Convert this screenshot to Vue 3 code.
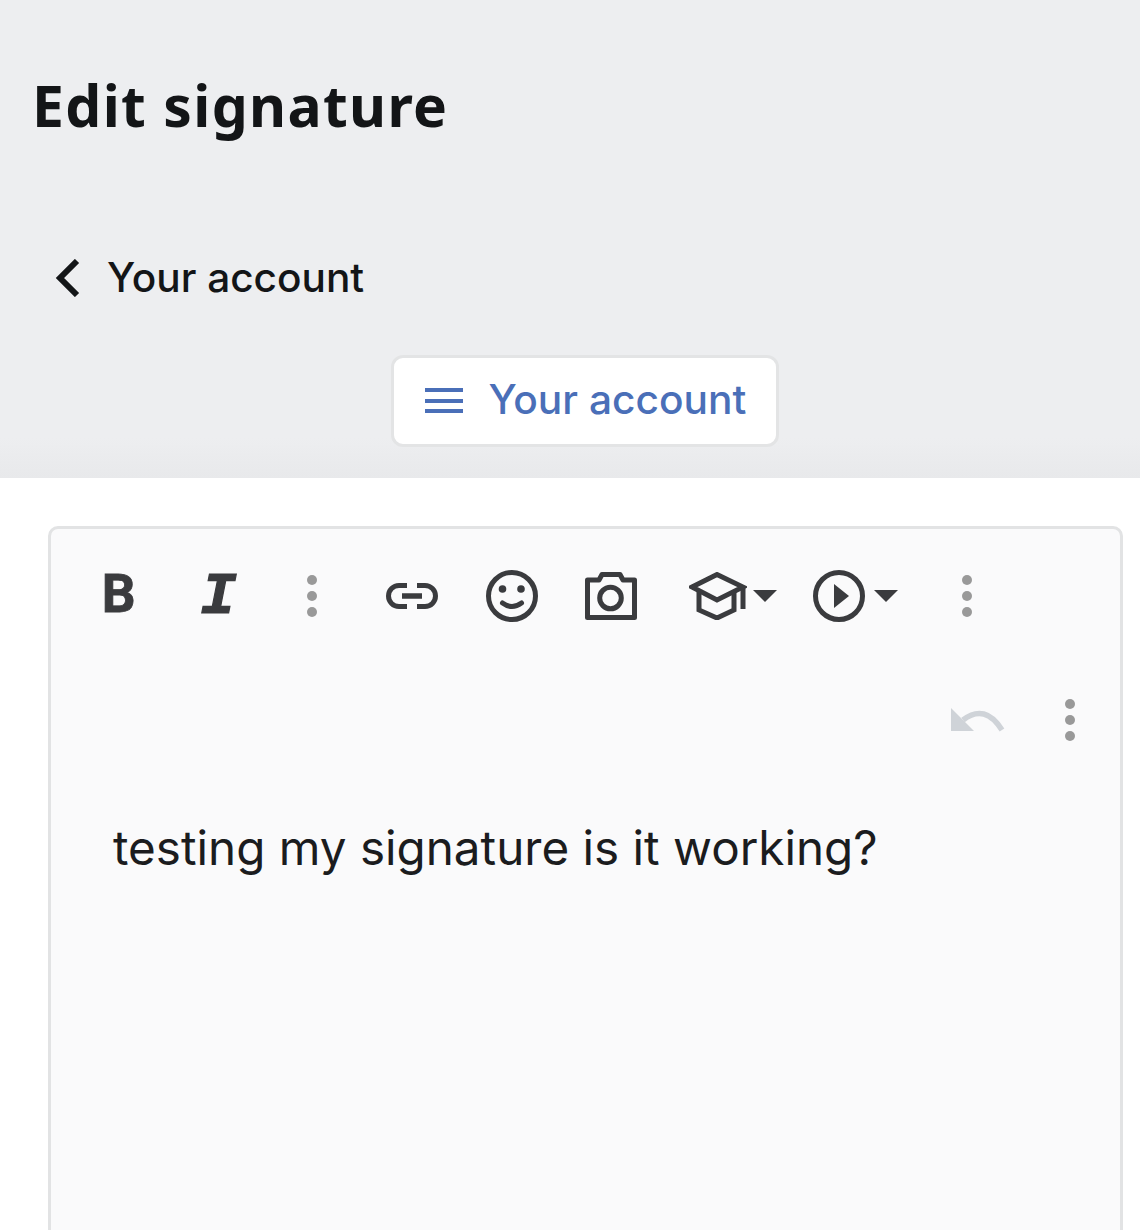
<template>
  <div class="page">
    <header class="top">
      <h1 class="title">Edit signature</h1>
      <a class="back">
        <svg width="26" height="38" viewBox="0 0 26 38" class="back-icon">
          <path d="M23 2 L6 19 L23 36" fill="none" stroke="#131517" stroke-width="6" />
        </svg>
        <span>Your account</span>
      </a>
      <div class="nav-wrap">
        <button class="nav-btn">
          <svg width="38" height="26" viewBox="0 0 38 26">
            <path d="M0 2 H38 M0 13 H38 M0 23 H38" stroke="#4a6fb8" stroke-width="4" />
          </svg>
          <span>Your account</span>
        </button>
      </div>
    </header>

    <main class="content">
      <div class="editor">
        <div class="toolbar">
          <span class="tool wide glyph-b">B</span>
          <span class="tool wide glyph-i">I</span>
          <span class="tool narrow group-end">
            <svg width="10" height="42" viewBox="0 0 10 42"><circle v-for="y in dots" :key="y" cx="5" :cy="y" r="5" fill="#999" /></svg>
          </span>
          <span class="tool wide">
            <svg width="52" height="26" viewBox="0 0 52 26" fill="none" stroke="#3a3b3e" stroke-width="5">
              <path d="M21 2.5 H13 a10.5 10.5 0 0 0 0 21 H21" />
              <path d="M31 2.5 H39 a10.5 10.5 0 0 1 0 21 H31" />
              <path d="M16 13 H36" stroke-width="5.5" />
            </svg>
          </span>
          <span class="tool wide">
            <svg width="52" height="52" viewBox="0 0 52 52" fill="none" stroke="#3a3b3e" stroke-width="5">
              <circle cx="26" cy="26" r="23.5" />
              <circle cx="16.5" cy="19" r="3.8" fill="#3a3b3e" stroke="none" />
              <circle cx="35" cy="19" r="3.8" fill="#3a3b3e" stroke="none" />
              <path d="M16.5 33 Q26 40 35.5 33" stroke-linecap="round" />
            </svg>
          </span>
          <span class="tool wide camera">
            <svg width="52" height="48" viewBox="0 0 52 48" fill="none" stroke="#3a3b3e" stroke-width="5" stroke-linejoin="round">
              <path d="M14 8 L17 2.5 H35 L38 8 H49.5 V45.5 H2.5 V8 Z" />
              <circle cx="25.5" cy="26" r="10.8" />
            </svg>
          </span>
          <span class="tool drop">
            <svg width="58" height="48" viewBox="0 0 58 48" fill="none" stroke="#3a3b3e" stroke-width="5">
              <path d="M3 15 L28 2.5 L54 15 L28 28 Z" />
              <path d="M10 20 V38 L28 46 L45 38 V20" />
              <path d="M54 15 V37" />
            </svg>
            <i class="caret"></i>
          </span>
          <span class="tool drop play">
            <svg width="52" height="52" viewBox="0 0 52 52" fill="none" stroke="#3a3b3e" stroke-width="5">
              <circle cx="26" cy="26" r="23.5" />
              <path d="M21 14 L36 26 L21 38 Z" fill="#3a3b3e" stroke="none" />
            </svg>
            <i class="caret"></i>
          </span>
          <span class="tool narrow last">
            <svg width="10" height="42" viewBox="0 0 10 42"><circle v-for="y in dots" :key="y" cx="5" :cy="y" r="5" fill="#999" /></svg>
          </span>
        </div>

        <div class="toolbar-right">
          <svg width="54" height="26" viewBox="0 0 54 26" fill="none">
            <path d="M0 1 V24 H23 Z" fill="#cfd3d8" />
            <path d="M12 13 Q34 -4 51 23" stroke="#cfd3d8" stroke-width="5.5" />
          </svg>
          <svg class="more" width="10" height="42" viewBox="0 0 10 42"><circle v-for="y in dots" :key="y" cx="5" :cy="y" r="5" fill="#999" /></svg>
        </div>

        <p class="body-text">testing my signature is it working?</p>
      </div>
    </main>
  </div>
</template>

<script setup>
const dots = [5, 21, 37]
</script>

<style>
html, body { margin: 0; background: #fff; overflow: hidden; }
</style>

<style scoped>
.page {
  height: 1230px;
  overflow: hidden;
  font-family: Inter, "Liberation Sans", sans-serif;
  color: #131517;
}
.top {
  height: 478px;
  box-sizing: border-box;
  padding: 66px 0 0 32px;
  background: linear-gradient(#edeef0 calc(100% - 40px), #e8e9eb);
}
.title {
  margin: 0;
  font-family: "Noto Sans", sans-serif;
  font-size: 57px;
  font-weight: 700;
  letter-spacing: 1.35px;
  line-height: 78px;
}
.back {
  display: flex;
  align-items: center;
  gap: 27px;
  margin: 106px 0 0 22px;
  height: 56px;
  font-size: 40.6px;
  font-weight: 500;
}
.back span {
  padding-bottom: 2px;
}
.nav-wrap {
  display: flex;
  justify-content: center;
  margin: 49px 0 0 -3px;
}
.nav-btn {
  display: flex;
  align-items: center;
  gap: 26px;
  width: 388px;
  height: 92px;
  box-sizing: border-box;
  padding: 0 0 0 31px;
  background: #fff;
  border: 3px solid #e3e4e5;
  border-radius: 12px;
  color: #4a6fb8;
  font-family: inherit;
  font-size: 40.7px;
  font-weight: 500;
}
.nav-btn span {
  padding-bottom: 4px;
}
.content {
  padding: 48px 17px 0 48px;
}
.editor {
  height: 720px;
  box-sizing: border-box;
  background: #fafafb;
  border: 3px solid #e2e3e4;
  border-radius: 10px;
}
.toolbar {
  display: flex;
  align-items: center;
  height: 86px;
  margin-top: 24px;
  padding-left: 18px;
}
.tool {
  display: flex;
  align-items: center;
  justify-content: center;
  height: 86px;
}
.wide { width: 99.5px; }
.narrow { width: 88.5px; }
.group-end { margin-right: 6px; }
.camera { margin-right: 12px; }
.drop { gap: 6px; width: 120px; }
.play { gap: 9px; width: 124px; }
.last { margin-left: 6px; }
.glyph-b {
  padding-bottom: 4px;
  box-sizing: border-box;
  font-family: Roboto, sans-serif;
  font-size: 53px;
  font-weight: 700;
  -webkit-text-stroke: 0.8px #3a3b3e;
  color: #3a3b3e;
}
.glyph-i {
  padding-top: 2px;
  box-sizing: border-box;
  font-family: "Liberation Mono", monospace;
  font-size: 60px;
  font-style: italic;
  font-weight: 700;
  -webkit-text-stroke: 1.2px #3a3b3e;
  color: #3a3b3e;
}
.caret {
  width: 0;
  height: 0;
  border-left: 12px solid transparent;
  border-right: 12px solid transparent;
  border-top: 12px solid #3a3b3e;
}
.toolbar-right {
  display: flex;
  align-items: center;
  justify-content: flex-end;
  gap: 60px;
  margin-top: 60px;
  padding-right: 45px;
}
.body-text {
  margin: 79px 0 0 62px;
  font-family: Inter, sans-serif;
  font-size: 47.6px;
  line-height: 56px;
  color: #1b1c1e;
}
</style>
